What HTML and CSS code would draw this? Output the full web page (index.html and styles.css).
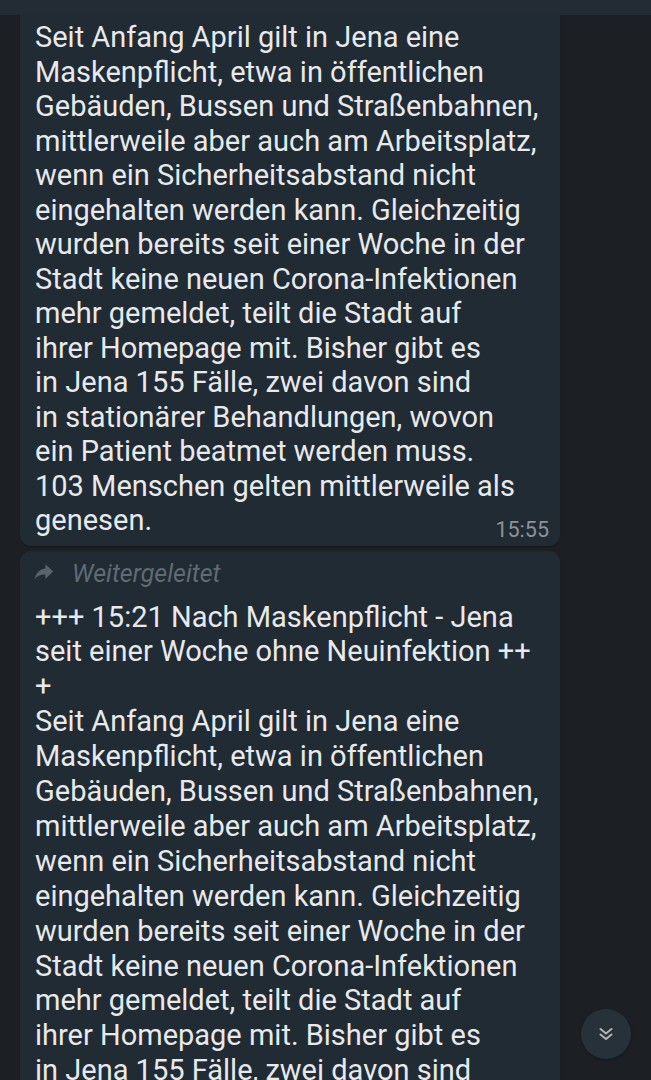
FILE: index.html
```html
<!DOCTYPE html>
<html lang="de">
<head>
<meta charset="utf-8">
<link rel="stylesheet" href="styles.css">
</head>
<body>
<div class="topbar"></div>
<div class="chat">
  <div class="bubble bubble-cut">
    <div class="text text-tight">Seit Anfang April gilt in Jena eine<br>Maskenpflicht, etwa in öffentlichen<br>Gebäuden, Bussen und Straßenbahnen,<br>mittlerweile aber auch am Arbeitsplatz,<br>wenn ein Sicherheitsabstand nicht<br>eingehalten werden kann. Gleichzeitig<br>wurden bereits seit einer Woche in der<br>Stadt keine neuen Corona-Infektionen<br>mehr gemeldet, teilt die Stadt auf<br>ihrer Homepage mit. Bisher gibt es<br>in Jena 155 Fälle, zwei davon sind<br>in stationärer Behandlungen, wovon<br>ein Patient beatmet werden muss.<br>103 Menschen gelten mittlerweile als<br>genesen.</div>
    <div class="meta"><span class="time">15:55</span></div>
  </div>
  <div class="bubble bubble-fwd">
    <div class="fwd">
      <svg class="fwd-icon" viewBox="0 0 24 24" width="22" height="22"><path d="M13.5 8.2V3.5l8.5 8-8.5 8v-4.8c-5.6 0-9.3 1.8-11.8 5.6 1-5.6 4.3-11.2 11.8-12.1z" fill="#58636c"/></svg>
      <span class="fwd-label">Weitergeleitet</span>
    </div>
    <div class="text">+++ 15:21 Nach Maskenpflicht - Jena<br>seit einer Woche ohne Neuinfektion ++<br>+<br>Seit Anfang April gilt in Jena eine<br>Maskenpflicht, etwa in öffentlichen<br>Gebäuden, Bussen und Straßenbahnen,<br>mittlerweile aber auch am Arbeitsplatz,<br>wenn ein Sicherheitsabstand nicht<br>eingehalten werden kann. Gleichzeitig<br>wurden bereits seit einer Woche in der<br>Stadt keine neuen Corona-Infektionen<br>mehr gemeldet, teilt die Stadt auf<br>ihrer Homepage mit. Bisher gibt es<br>in Jena 155 Fälle, zwei davon sind<br>in stationärer Behandlungen, wovon<br>ein Patient beatmet werden muss.</div>
  </div>
</div>
<button class="scroll-down" aria-label="Nach unten">
  <svg viewBox="0 0 24 24" width="22" height="22"><path d="M6 6.5l6 5 6-5M6 12.5l6 5 6-5" fill="none" stroke="#aeb4b9" stroke-width="2.2" stroke-linecap="round" stroke-linejoin="round"/></svg>
</button>
</body>
</html>
```
FILE: styles.css
```css
html, body {
  margin: 0;
  padding: 0;
}
body {
  background: #1c2024;
  font-family: Roboto, "Liberation Sans", sans-serif;
  color: #e7e9eb;
  height: 1080px;
  overflow: hidden;
}
.topbar {
  height: 15px;
  background: #232c35;
}
.chat {
  display: flex;
  flex-direction: column;
  gap: 5px;
  padding-left: 20px;
}
.bubble {
  width: 540px;
  box-sizing: border-box;
  background: #212b34;
  border-radius: 11px;
  padding: 7px 11px 4px 15px;
  box-shadow: 0 1px 1px rgba(0,0,0,0.25);
}
.bubble-cut {
  border-top-left-radius: 0;
  border-top-right-radius: 0;
  padding-top: 5px;
}
.bubble-fwd {
  padding-top: 6.5px;
}
.text {
  font-size: 29px;
  line-height: 34.9px;
  white-space: nowrap;
}
.text-tight {
  line-height: 34.5px;
}
.meta {
  display: flex;
  justify-content: flex-end;
  margin-top: -20px;
  line-height: 24px;
}
.time {
  font-size: 21.5px;
  color: #8b9399;
}
.fwd {
  display: flex;
  align-items: center;
  gap: 17px;
  height: 32px;
  margin-bottom: 10.5px;
}
.fwd-icon {
  width: 22px;
  height: 22px;
  margin-left: -2px;
  margin-top: -3px;
}
.fwd-label {
  font-size: 25px;
  font-style: italic;
  color: #5f6a73;
}
.scroll-down {
  position: fixed;
  right: 20px;
  bottom: 21px;
  width: 50px;
  height: 50px;
  border-radius: 50%;
  border: none;
  background: #26313a;
  display: flex;
  align-items: center;
  justify-content: center;
  padding: 0;
  box-shadow: 0 1px 3px rgba(0,0,0,0.3);
}
```
